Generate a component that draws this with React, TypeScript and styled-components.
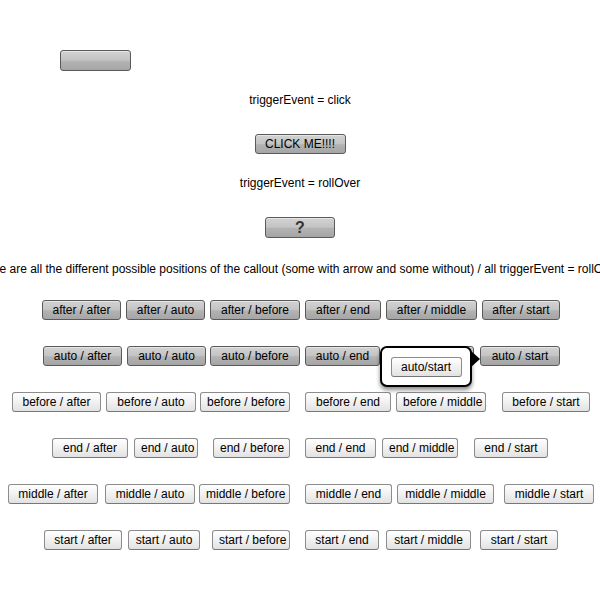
import React from 'react';
import styled, { createGlobalStyle, css } from 'styled-components';

const GlobalStyle = createGlobalStyle`
  html, body {
    margin: 0;
    padding: 0;
    background: #fff;
    overflow: hidden;
  }
  body {
    font-family: 'Liberation Sans', Arial, sans-serif;
    font-size: 12px;
    color: #000;
  }
`;

const Page = styled.div`
  display: flex;
  flex-direction: column;
  align-items: center;
  width: 600px;
  height: 600px;
  padding-top: 50px;
  box-sizing: border-box;
`;

const darkSkin = css`
  border: 1px solid #5a5a5a;
  background: linear-gradient(to bottom, #d2d2d2 0%, #c4c4c4 48%, #b3b3b3 54%, #a5a5a5 100%);
  box-shadow: inset 0 1px 0 rgba(255, 255, 255, 0.45);
`;

const lightSkin = css`
  border: 1px solid #8c8c8c;
  border-bottom-color: #777;
  background: linear-gradient(to bottom, #ffffff 0%, #f1f1f1 50%, #e2e2e2 100%);
`;

const Button = styled.button<{ $light?: boolean; $w?: number }>`
  box-sizing: border-box;
  flex: none;
  height: 20px;
  padding: 0 6px;
  border-radius: 3px;
  font-family: 'Liberation Sans', Arial, sans-serif;
  font-size: 12px;
  color: #000;
  line-height: 18px;
  white-space: nowrap;
  cursor: pointer;
  ${(p) => (p.$light ? lightSkin : darkSkin)}
  ${(p) => (p.$w ? `width: ${p.$w}px;` : '')}
`;

const BlankButton = styled(Button)`
  align-self: flex-start;
  margin-left: 60px;
  width: 71px;
  height: 21px;
`;

const ClickButton = styled(Button)`
  width: 91px;
  margin-top: 27px;
`;

const HelpButton = styled(Button)`
  width: 70px;
  height: 21px;
  margin-top: 27px;
  font-size: 16px;
  font-weight: bold;
  color: #333;
  line-height: 19px;
`;

const Label = styled.div<{ $mt: number }>`
  margin-top: ${(p) => p.$mt}px;
  line-height: 14px;
  white-space: nowrap;
`;

const WideLabel = styled.div`
  display: flex;
  justify-content: center;
  width: 600px;
  margin-top: 24px;
  line-height: 14px;
  white-space: nowrap;
`;

const Rows = styled.div`
  display: flex;
  flex-direction: column;
  gap: 26px;
  width: 600px;
  margin-top: 24px;
`;

const Row = styled.div`
  display: flex;
  height: 20px;
`;

const Anchor = styled.div<{ $ml: number }>`
  position: relative;
  flex: none;
  margin-left: ${(p) => p.$ml}px;
  display: flex;
`;

const Callout = styled.div`
  position: absolute;
  right: 100%;
  top: 0;
  display: flex;
  align-items: flex-start;
  z-index: 2;
`;

const CalloutBox = styled.div`
  box-sizing: border-box;
  width: 92px;
  height: 41px;
  border: 2px solid #000;
  border-radius: 7px;
  background: #fff;
  box-shadow: 0 3px 4px rgba(0, 0, 0, 0.45);
  display: flex;
  justify-content: center;
  padding-top: 9px;
`;

const Arrow = styled.div`
  width: 0;
  height: 0;
  margin-top: 5px;
  margin-left: -1px;
  border-top: 8px solid transparent;
  border-bottom: 8px solid transparent;
  border-left: 9px solid #000;
`;

type Spot = [string, number, number];

const rows: { light: boolean; items: Spot[] }[] = [
  {
    light: false,
    items: [
      ['after / after', 42, 120],
      ['after / auto', 126, 204],
      ['after / before', 210, 299],
      ['after / end', 305, 380],
      ['after / middle', 386, 476],
      ['after / start', 482, 559],
    ],
  },
  {
    light: false,
    items: [
      ['auto / after', 43, 121],
      ['auto / auto', 127, 205],
      ['auto / before', 210, 299],
      ['auto / end', 305, 379],
      ['auto / middle', 386, 473],
      ['auto / start', 480, 559],
    ],
  },
  {
    light: true,
    items: [
      ['before / after', 12, 100],
      ['before / auto', 106, 195],
      ['before / before', 200, 289],
      ['before / end', 305, 390],
      ['before / middle', 396, 485],
      ['before / start', 502, 589],
    ],
  },
  {
    light: true,
    items: [
      ['end / after', 52, 127],
      ['end / auto', 134, 197],
      ['end / before', 213, 289],
      ['end / end', 305, 375],
      ['end / middle', 382, 457],
      ['end / start', 474, 547],
    ],
  },
  {
    light: true,
    items: [
      ['middle / after', 8, 97],
      ['middle / auto', 105, 194],
      ['middle / before', 199, 289],
      ['middle / end', 305, 391],
      ['middle / middle', 397, 493],
      ['middle / start', 504, 593],
    ],
  },
  {
    light: true,
    items: [
      ['start / after', 44, 121],
      ['start / auto', 128, 199],
      ['start / before', 212, 289],
      ['start / end', 305, 378],
      ['start / middle', 386, 470],
      ['start / start', 480, 557],
    ],
  },
];

const App = () => {
  return (
    <>
      <GlobalStyle />
      <Page>
        <BlankButton />
        <Label $mt={22}>triggerEvent = click</Label>
        <ClickButton>CLICK ME!!!!</ClickButton>
        <Label $mt={22}>triggerEvent = rollOver</Label>
        <HelpButton>?</HelpButton>
        <WideLabel>
          <span>
            Here are all the different possible positions of the callout (some with arrow and some without) / all
            triggerEvent = rollOver
          </span>
        </WideLabel>
        <Rows>
          {rows.map((row, ri) => {
            let prev = 0;
            return (
              <Row key={ri}>
                {row.items.map(([label, x0, x1]) => {
                  const ml = x0 - prev;
                  prev = x1 + 1;
                  const open = label === 'auto / start';
                  return (
                    <Anchor key={label} $ml={ml}>
                      <Button $light={row.light} $w={x1 - x0 + 1}>
                        {label}
                      </Button>
                      {open && (
                        <Callout>
                          <CalloutBox>
                            <Button $light $w={71}>
                              auto/start
                            </Button>
                          </CalloutBox>
                          <Arrow />
                        </Callout>
                      )}
                    </Anchor>
                  );
                })}
              </Row>
            );
          })}
        </Rows>
      </Page>
    </>
  );
};

export default App;
